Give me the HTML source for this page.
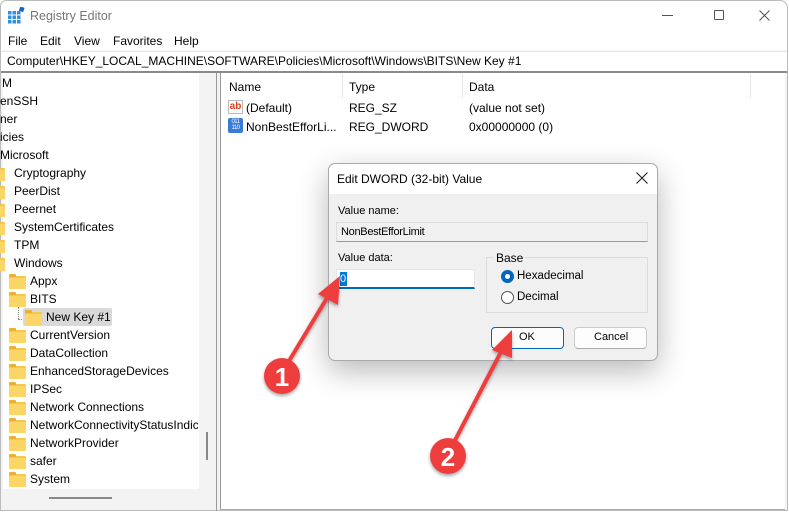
<!DOCTYPE html>
<html><head><meta charset="utf-8">
<style>
*{margin:0;padding:0;box-sizing:border-box}
body{width:789px;height:512px;overflow:hidden;background:#fff;font-family:"Liberation Sans",sans-serif;font-size:12px;color:#000;position:relative}
.abs{position:absolute}
.t{position:absolute;white-space:nowrap}
.fold{position:absolute;width:17px;height:13px;background:#f8c74a;border-radius:1px}
.fold:before{content:"";position:absolute;left:0;top:-2px;width:7px;height:3px;background:#e9b236;border-radius:1px 1px 0 0}
.fold:after{content:"";position:absolute;left:0;top:2px;width:17px;height:11px;background:#fcd567;border-radius:1px}
</style></head><body>
<div class="abs" style="left:0;top:0;width:788px;height:511px;border:1px solid #bbb;border-radius:6px 8px 0 0;background:#f3f3f3"></div>
<div class="abs" style="left:1px;top:1px;width:786px;height:49px;background:#fff;border-radius:6px 8px 0 0"></div>
<svg class="abs" style="left:8px;top:7px" width="17" height="17" viewBox="0 0 17 17">
<g fill="#2f8fe0"><rect x="0" y="4" width="3.5" height="3.5"/><rect x="4.5" y="4" width="3.5" height="3.5"/><rect x="9" y="4" width="3.5" height="3.5"/><rect x="0" y="8.5" width="3.5" height="3.5"/><rect x="4.5" y="8.5" width="3.5" height="3.5"/><rect x="9" y="8.5" width="3.5" height="3.5"/><rect x="0" y="13" width="3.5" height="3.5"/><rect x="4.5" y="13" width="3.5" height="3.5"/><rect x="9" y="13" width="3.5" height="3.5"/></g>
<rect x="11.5" y="0" width="4.5" height="4.5" fill="#1566c0" transform="rotate(20 13.7 2.2)"/></svg>
<div class="t" style="left:30px;top:9px;color:#777;font-size:12.5px">Registry Editor</div>
<div class="abs" style="left:662px;top:15px;width:11px;height:1px;background:#555"></div>
<div class="abs" style="left:714px;top:10px;width:10px;height:10px;border:1px solid #555;border-radius:1px"></div>
<svg class="abs" style="left:759px;top:10px" width="11" height="11"><path d="M0.5 0.5L10.5 10.5M10.5 0.5L0.5 10.5" stroke="#555" stroke-width="1"/></svg>
<div class="t" style="left:8px;top:34px">File</div>
<div class="t" style="left:40px;top:34px">Edit</div>
<div class="t" style="left:74px;top:34px">View</div>
<div class="t" style="left:113px;top:34px">Favorites</div>
<div class="t" style="left:174px;top:34px">Help</div>
<div class="abs" style="left:1px;top:51px;width:786px;height:20px;background:#fff;border-top:1px solid #e8e8e8"></div>
<div class="t" style="left:7px;top:54px">Computer\HKEY_LOCAL_MACHINE\SOFTWARE\Policies\Microsoft\Windows\BITS\New Key #1</div>
<div class="abs" style="left:1px;top:71px;width:786px;height:2px;background:#8a8a8a"></div>
<div class="abs" style="left:3px;top:73px;width:196px;height:419px;background:#fff"></div>
<div class="abs" style="left:206px;top:432px;width:2px;height:28px;background:#888"></div>
<div class="abs" style="left:49px;top:497px;width:63px;height:2px;background:#888"></div>
<div class="abs" style="left:216px;top:73px;width:1px;height:438px;background:#999"></div>
<div class="abs" style="left:220px;top:73px;width:565px;height:437px;background:#fff;border-left:1px solid #999;border-bottom:1px solid #aaa"></div>
<div class="t" style="left:2px;top:76px">M</div>
<div class="t" style="left:0px;top:94px">enSSH</div>
<div class="t" style="left:0px;top:112px">ner</div>
<div class="t" style="left:0px;top:130px">icies</div>
<div class="t" style="left:0px;top:148px">Microsoft</div>
<div class="fold" style="left:-12px;top:168px"></div><div class="t" style="left:14px;top:166px">Cryptography</div>
<div class="fold" style="left:-12px;top:186px"></div><div class="t" style="left:14px;top:184px">PeerDist</div>
<div class="fold" style="left:-12px;top:204px"></div><div class="t" style="left:14px;top:202px">Peernet</div>
<div class="fold" style="left:-12px;top:222px"></div><div class="t" style="left:14px;top:220px">SystemCertificates</div>
<div class="fold" style="left:-12px;top:240px"></div><div class="t" style="left:14px;top:238px">TPM</div>
<div class="fold" style="left:-12px;top:258px"></div><div class="t" style="left:14px;top:256px">Windows</div>
<div class="fold" style="left:9px;top:276px"></div><div class="t" style="left:30px;top:274px">Appx</div>
<div class="fold" style="left:9px;top:294px"></div><div class="t" style="left:30px;top:292px">BITS</div>
<div class="abs" style="left:18px;top:307px;width:1px;height:12px;border-left:1px dotted #888"></div>
<div class="abs" style="left:18px;top:319px;width:6px;border-top:1px dotted #888"></div>
<div class="abs" style="left:23px;top:308px;width:89px;height:18px;background:#d9d9d9;border-radius:2px"></div>
<div class="fold" style="left:25px;top:312px"></div><div class="t" style="left:46px;top:310px">New Key #1</div>
<div class="fold" style="left:9px;top:330px"></div><div class="t" style="left:30px;top:328px">CurrentVersion</div>
<div class="fold" style="left:9px;top:348px"></div><div class="t" style="left:30px;top:346px">DataCollection</div>
<div class="fold" style="left:9px;top:366px"></div><div class="t" style="left:30px;top:364px">EnhancedStorageDevices</div>
<div class="fold" style="left:9px;top:384px"></div><div class="t" style="left:30px;top:382px">IPSec</div>
<div class="fold" style="left:9px;top:402px"></div><div class="t" style="left:30px;top:400px">Network Connections</div>
<div class="fold" style="left:9px;top:420px"></div><div class="t" style="left:30px;top:418px;width:168px;overflow:hidden">NetworkConnectivityStatusIndicator</div>
<div class="fold" style="left:9px;top:438px"></div><div class="t" style="left:30px;top:436px">NetworkProvider</div>
<div class="fold" style="left:9px;top:456px"></div><div class="t" style="left:30px;top:454px">safer</div>
<div class="fold" style="left:9px;top:474px"></div><div class="t" style="left:30px;top:472px">System</div>
<div class="abs" style="left:3px;top:489px;width:196px;height:3px;background:#f3f3f3"></div>
<div class="t" style="left:229px;top:80px">Name</div>
<div class="abs" style="left:342px;top:74px;width:1px;height:24px;background:#e5e5e5"></div>
<div class="t" style="left:349px;top:80px">Type</div>
<div class="abs" style="left:462px;top:74px;width:1px;height:24px;background:#e5e5e5"></div>
<div class="t" style="left:469px;top:80px">Data</div>
<div class="abs" style="left:750px;top:74px;width:1px;height:24px;background:#e5e5e5"></div>
<div class="abs" style="left:228px;top:100px;width:15px;height:14px;border:1px solid #bbb;background:#fff;color:#d9401b;font-weight:bold;font-size:10px;line-height:11px;text-align:center">ab</div>
<div class="t" style="left:246px;top:101px">(Default)</div>
<div class="t" style="left:349px;top:101px">REG_SZ</div>
<div class="t" style="left:469px;top:101px">(value not set)</div>
<div class="abs" style="left:228px;top:118px;width:15px;height:15px;background:#3a7bd5;border-radius:2px;color:#fff;font-size:6px;line-height:6px;text-align:center;padding-top:1px;letter-spacing:-0.5px">011<br>110</div>
<div class="t" style="left:246px;top:120px">NonBestEfforLi...</div>
<div class="t" style="left:349px;top:120px">REG_DWORD</div>
<div class="t" style="left:469px;top:120px">0x00000000 (0)</div>
<div class="abs" style="left:328px;top:163px;width:330px;height:198px;background:#f0f0f0;border:1px solid #aaa;border-radius:7px;box-shadow:0 10px 30px rgba(0,0,0,0.28)"></div>
<div class="abs" style="left:329px;top:164px;width:328px;height:30px;background:#fff;border-radius:7px 7px 0 0"></div>
<div class="t" style="left:337px;top:172px">Edit DWORD (32-bit) Value</div>
<svg class="abs" style="left:636px;top:172px" width="12" height="12"><path d="M0.5 0.5L11.5 11.5M11.5 0.5L0.5 11.5" stroke="#222" stroke-width="1.1"/></svg>
<div class="t" style="left:338px;top:205px;font-size:11px">Value name:</div>
<div class="abs" style="left:336px;top:222px;width:312px;height:20px;background:#f0f0f0;border:1px solid #ddd;border-bottom:1px solid #999"></div>
<div class="t" style="left:341px;top:226px;font-size:11px;letter-spacing:-0.3px">NonBestEfforLimit</div>
<div class="t" style="left:338px;top:252px;font-size:11px">Value data:</div>
<div class="abs" style="left:336px;top:269px;width:139px;height:20px;background:#fff;border:1px solid #e5e5e5;border-bottom:2px solid #0067c0"></div>
<div class="abs" style="left:340px;top:272px;width:7px;height:14px;background:#0078d7;color:#fff;font-size:11px;line-height:14px">0</div>
<div class="abs" style="left:486px;top:257px;width:162px;height:56px;border:1px solid #dcdcdc"></div>
<div class="t" style="left:494px;top:251px;font-size:12px;background:#f0f0f0;padding:0 2px">Base</div>
<div class="abs" style="left:501px;top:270px;width:13px;height:13px;border-radius:50%;background:#0067c0"></div>
<div class="abs" style="left:505px;top:274px;width:5px;height:5px;border-radius:50%;background:#fff"></div>
<div class="t" style="left:517px;top:270px;font-size:11.5px">Hexadecimal</div>
<div class="abs" style="left:501px;top:291px;width:13px;height:13px;border-radius:50%;border:1px solid #555;background:#fff"></div>
<div class="t" style="left:517px;top:291px;font-size:11.5px">Decimal</div>
<div class="abs" style="left:491px;top:327px;width:73px;height:22px;border:1px solid #0067c0;border-radius:4px;background:#fcfcfc"></div>
<div class="t" style="left:519px;top:331px;font-size:11px">OK</div>
<div class="abs" style="left:574px;top:327px;width:73px;height:22px;border:1px solid #ccc;border-bottom-color:#aaa;border-radius:4px;background:#fdfdfd"></div>
<div class="t" style="left:594px;top:331px;font-size:11px">Cancel</div>
<svg class="abs" style="left:0;top:0" width="789" height="512">
<defs><filter id="sh"><feDropShadow dx="0" dy="2" stdDeviation="1.5" flood-opacity="0.35"/></filter></defs>
<g fill="#ee3d3d" stroke="#ee3d3d" filter="url(#sh)">
<line x1="286" y1="366" x2="330" y2="293" stroke-width="4"/>
<polygon points="340,276 318,294 338,305" stroke="none"/>
<circle cx="282" cy="376" r="18" stroke="none"/>
<line x1="452" y1="446" x2="503" y2="348" stroke-width="4"/>
<polygon points="512,330 492,350 512,358" stroke="none"/>
<circle cx="448" cy="456" r="18" stroke="none"/>
</g>
<text x="282" y="386" font-family="Liberation Sans" font-weight="bold" font-size="26" fill="#fff" text-anchor="middle">1</text>
<text x="448" y="466" font-family="Liberation Sans" font-weight="bold" font-size="26" fill="#fff" text-anchor="middle">2</text>
</svg>
</body></html>
